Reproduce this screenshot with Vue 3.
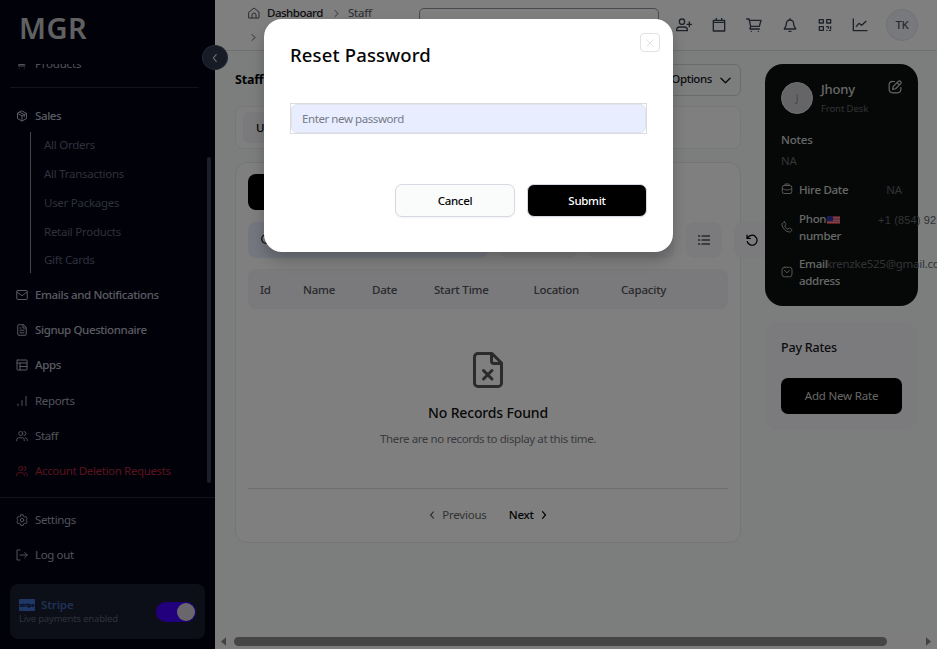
<script setup>
const icons = {
  cart: 'M1.5 2h2.2l2.3 11h11.5l2.5-8.5H4.5M6 13l-1 3h13M6.500 20.500h.1M16.500 20.500h.1',
  box: 'M12 2l9 4.800v10.400L12 22l-9-4.800V6.800zM3 6.800l9 5 9-5M12 12v10M7.500 4.400l9 5v4',
  mail: 'M3 3h18a1.500 1.500 0 0 1 1.500 1.500v15a1.500 1.500 0 0 1-1.500 1.500H3a1.500 1.500 0 0 1-1.500-1.500v-15A1.500 1.500 0 0 1 3 3zM2 6l10 7.500L22 6',
  doc: 'M14.500 1.500H5a1.500 1.500 0 0 0-1.500 1.500v18A1.500 1.500 0 0 0 5 22.500h14a1.500 1.500 0 0 0 1.500-1.500V7.500zM14 1.500V8h6M8 12.500h8M8 17.500h8M8 8h2',
  layout: 'M3 2h18a1 1 0 0 1 1 1v18a1 1 0 0 1-1 1H3a1 1 0 0 1-1-1V3a1 1 0 0 1 1-1zM2 8h20M8 8v14M8 15h14',
  bars: 'M4 21v-3M12 21V11M20 21V3',
  users: 'M13.500 7a4 4 0 1 1-8 0 4 4 0 0 1 8 0zM16 3a4 4 0 0 1 0 8M1.500 21.500v-2a4 4 0 0 1 4-4h7a4 4 0 0 1 4 4v2M19 15.500a4 4 0 0 1 3.500 4v2',
  gear: 'M9.600 1.500h4.800l.7 3.200 2 1.200 3-.9 2.400 4.200-2.300 2.100v1.800l2.300 2.100-2.400 4.200-3-.9-2 1.200-.7 3.200H9.600l-.7-3.200-2-1.200-3 .9-2.400-4.200 2.300-2.100v-1.800L1.500 9.200 3.900 5l3 .9 2-1.200zM15.500 12.200a3.500 3.500 0 1 1-7 0 3.500 3.500 0 0 1 7 0z',
  logout: 'M8 2H2v20h6M8 12h14.500M17.500 7l5 5-5 5'
}
const main = [
  { t: 'Emails and Notifications', i: 'mail', c: 'strong' },
  { t: 'Signup Questionnaire', i: 'doc', c: 'strong' },
  { t: 'Apps', i: 'layout', c: 'strong' },
  { t: 'Reports', i: 'bars', c: '' },
  { t: 'Staff', i: 'users', c: '' },
  { t: 'Account Deletion Requests', i: 'users', c: 'danger' }
]
const subs = ['All Orders', 'All Transactions', 'User Packages', 'Retail Products', 'Gift Cards']
const tools = [
  'M13 7a4 4 0 1 1-8 0 4 4 0 0 1 8 0zM1 20.500v-1A4.500 4.500 0 0 1 5.500 15h7a4.500 4.500 0 0 1 4.500 4.500v1H1M20 7.500v7M16.500 11h7',
  'M3.500 5h17v16h-17zM8 2v3M16 2v3M3.500 8h17',
  'M1 3h3.500L7 14h13l2.500-9H5M7 14l-1 4h14M8 21.500h.1M18.500 21.500h.1',
  'M6.500 10a5.500 5.500 0 0 1 11 0c0 5 3 5.500 3 8h-17c0-2.500 3-3 3-8zM12 2.500v2M10.500 21.500h3',
  'M3.500 4h6v5h-6zM14.500 4h6v5h-6zM3.500 14.500h6v5.500h-6zM14.500 14.500h2.500v2.500M20.500 14.500v3M14.500 20h.500M18.500 20h2',
  'M2 3v17.500h20.500M6.500 14l4-4.500 4 3 6.500-6'
]
const columns = ['Id', 'Name', 'Date', 'Start Time', 'Location', 'Capacity']
</script>

<template>
  <div class="screen">
    <aside class="sidebar">
      <div class="logo">MGR</div>
      <div class="scroller">
        <div class="item cut"><svg viewBox="0 0 24 24"><path :d="icons.cart" /></svg><span>Products</span></div>
        <div class="rule"></div>
        <div class="item strong sales"><svg viewBox="0 0 24 24"><path :d="icons.box" /></svg><span>Sales</span></div>
        <div class="subs"><div v-for="s in subs" :key="s">{{ s }}</div></div>
        <div v-for="m in main" :key="m.t" class="item" :class="m.c"><svg viewBox="0 0 24 24"><path :d="icons[m.i]" /></svg><span>{{ m.t }}</span></div>
        <i class="vbar"></i>
      </div>
      <div class="foot">
        <div class="item"><svg viewBox="0 0 24 24"><path :d="icons.gear" /></svg><span>Settings</span></div>
        <div class="item"><svg viewBox="0 0 24 24"><path :d="icons.logout" /></svg><span>Log out</span></div>
        <div class="stripe">
          <div><div class="sname"><b>stripe</b><span>Stripe</span></div><div class="slive">Live payments enabled</div></div>
          <div class="toggle"><i></i></div>
        </div>
      </div>
      <div class="collapse"><svg viewBox="0 0 24 24"><path d="M15 4l-7 8 7 8" /></svg></div>
    </aside>

    <div class="page">
      <header>
        <div class="crumbs">
          <div><svg class="home" viewBox="0 0 24 24"><path d="M2 10l10-8 10 8v12H2zM8 22v-6a4 4 0 0 1 8 0v6" /></svg><span class="dash">Dashboard</span><svg class="sep" viewBox="0 0 24 24"><path d="M8 4l8 8-8 8" /></svg><span class="st">Staff</span></div>
          <div><svg class="sep two" viewBox="0 0 24 24"><path d="M8 4l8 8-8 8" /></svg></div>
        </div>
        <div class="search"></div>
        <div class="tools"><svg v-for="(d, n) in tools" :key="n" viewBox="0 0 24 24"><path :d="d" /></svg></div>
        <div class="tk">TK</div>
      </header>

      <div class="content">
        <section class="left">
          <div class="title"><h2>Staff</h2><div class="options"><span>Options</span><svg viewBox="0 0 24 24"><path d="M2 7l10 10L22 7" /></svg></div></div>
          <div class="tabs"><div>Upcoming</div></div>
          <div class="card">
            <div class="black"></div>
            <div class="filters">
              <div class="find"><svg viewBox="0 0 24 24"><circle cx="10" cy="10" r="8.500" /><path d="M16 16l6 6" /></svg></div>
              <div class="f1"></div><div class="f2"></div>
              <div class="f3"><svg viewBox="0 0 24 24"><path d="M8 4h15M8 12h15M8 20h15M1 4h2.500M1 12h2.500M1 20h2.500" /></svg></div>
              <div class="f4"><svg viewBox="0 0 24 24"><path d="M2 2v7h7M3 8.500A10 10 0 1 1 2.500 15" /></svg></div>
            </div>
            <div class="thead"><span v-for="c in columns" :key="c">{{ c }}</span></div>
            <div class="empty">
              <svg viewBox="0 0 30 36"><path d="M5 1.500h14l9.500 9.500v20a3.500 3.500 0 0 1-3.500 3.500H5A3.500 3.500 0 0 1 1.500 31V5A3.500 3.500 0 0 1 5 1.500zM18.500 1.500V9a2.500 2.500 0 0 0 2.500 2.500h7.500M10.500 18.500l8.500 8.500M19 18.500L10.500 27" /></svg>
              <h3>No Records Found</h3>
              <p>There are no records to display at this time.</p>
            </div>
            <div class="pager">
              <svg viewBox="0 0 24 24"><path d="M15.500 4.500l-7 7.500 7 7.500" /></svg><span class="prev">Previous</span>
              <span class="next">Next</span><svg class="dark" viewBox="0 0 24 24"><path d="M8.500 4l7 8-7 8" /></svg>
            </div>
          </div>
        </section>

        <aside class="right">
          <div class="profile">
            <div class="who">
              <div class="face">J</div>
              <div class="names"><strong>Jhony</strong><span>Front Desk</span></div>
              <svg viewBox="0 0 24 24"><path d="M11 2.500H8A6 6 0 0 0 2 8v8a6 6 0 0 0 6 6h8a6 6 0 0 0 6-6v-3M8 16l1-5 8.500-8.500a2.500 2.500 0 0 1 4 4L13 15zM15.500 4.500l4 4" /></svg>
            </div>
            <div class="notes">Notes</div><div class="na">NA</div>
            <div class="info hire"><svg viewBox="0 0 24 24"><path d="M6 5h12a3.500 3.500 0 0 1 3.500 3.500v9A3.500 3.500 0 0 1 18 21H6a3.500 3.500 0 0 1-3.500-3.500v-9A3.500 3.500 0 0 1 6 5zM8 5V2h8v3M2.500 11c5 4 14 4 19 0" /></svg><label>Hire Date</label><span>NA</span></div>
            <div class="info phone"><svg viewBox="0 0 24 24"><path d="M7 2c2 1 3 4 2.500 5.500L7.500 10c1 3 3.500 5.500 6.500 6.500l2.500-2c2 0 4.500 1.500 5.500 3.500-1 3-3.500 4.500-6 4C9 20.500 3.500 15 2 8c-.5-3 2-5.500 5-6z" /></svg><label>Phone<br>number</label>
              <div class="tel"><svg class="flag" viewBox="0 0 13 8"><path class="fw" d="M0 0h13v8H0z" /><path class="fr" d="M0 0h13v1.500H0zM0 2.300h13v1.400H0zM0 4.500h13v1.300H0zM0 6.600h13V8H0z" /><path class="fb" d="M0 0h6v5H0z" /></svg><span>+1 (854) 92</span></div></div>
            <div class="info email"><svg viewBox="0 0 24 24"><rect x="2" y="2.500" width="20" height="19" rx="5" /><path d="M7 9l5 4.500L17 9" /></svg><label>Email<br>address</label><span>krenzke525@gmail.com</span></div>
          </div>
          <div class="rates"><h4>Pay Rates</h4><div>Add New Rate</div></div>
        </aside>
      </div>
      <div class="hscroll"><svg viewBox="0 0 6 10"><path d="M6 0v10L0 5z" /></svg><i></i><svg viewBox="0 0 6 10"><path d="M0 0v10l6-5z" /></svg></div>
    </div>

    <div class="overlay">
      <div class="modal">
        <div class="mhead"><h1>Reset Password</h1><div class="close"><svg viewBox="0 0 24 24"><path d="M2 2l20 20M22 2L2 22" /></svg></div></div>
        <div class="field"><div>Enter new password</div></div>
        <div class="actions"><div class="cancel">Cancel</div><div class="submit">Submit</div></div>
      </div>
    </div>
  </div>
</template>

<style>
body { margin: 0; overflow: hidden; }
</style>

<style scoped>
* { box-sizing: border-box; }
h1, h2, h3, h4, p { margin: 0; }
svg { fill: none; stroke: currentColor; stroke-width: 2; stroke-linecap: round; stroke-linejoin: round; flex: none; display: block; }
.screen { position: relative; width: 937px; height: 649px; overflow: hidden; display: flex; font-family: "Noto Sans", sans-serif; font-size: 11.5px; letter-spacing: -.2px; white-space: nowrap; }
.sidebar { position: relative; width: 215px; flex: none; background: #020214; color: #a2a6b2; display: flex; flex-direction: column; letter-spacing: -.36px; }
.logo { height: 64px; padding: 7px 0 0 19px; font-size: 29px; line-height: 42px; font-weight: 600; color: #c2c2c4; letter-spacing: .5px; }
.scroller { position: relative; height: 434px; overflow: hidden; border-bottom: 1px solid #24273a; }
.item { height: 35.1px; display: flex; align-items: center; padding-left: 16px; gap: 7px; }
.item svg { width: 12px; height: 12px; }
.item span { line-height: 16px; }
.strong { font-weight: 500; color: #b4b7c2; letter-spacing: -.38px; }
.danger { color: #b22638; }
.cut { margin-top: -18px; }
.cut span { letter-spacing: -.2px; }
.rule { height: 1px; margin: 6px 16px 10px 10px; background: #24273a; }
.subs { margin-left: 30px; border-left: 1px solid #8a8b90; padding-left: 13px; height: 141px; margin-bottom: 4.500px; margin-top: -1px; color: #5d6376; letter-spacing: -.27px; }
.subs div { height: 28.800px; line-height: 26px; }
.vbar { position: absolute; left: 207px; top: 93px; width: 4px; height: 326px; border-radius: 2px; background: #334155; }
.foot { padding-top: 4px; }
.stripe { margin: 12px 10px 0; height: 55px; border-radius: 8px; background: #191e30; display: flex; align-items: center; justify-content: space-between; padding: 0 9px; }
.sname { display: flex; align-items: center; gap: 6px; font-weight: 600; color: #3f62a8; line-height: 14px; letter-spacing: -.1px; }
.sname b { width: 16px; height: 12px; background: #3f6fce; border-radius: 1px; color: #0d1738; font-size: 5.500px; line-height: 12px; text-align: center; letter-spacing: -.3px; }
.slive { font-size: 9.500px; line-height: 14px; color: #5d6376; letter-spacing: -.18px; }
.toggle { width: 40px; height: 20px; border-radius: 10px; background: #4400fa; padding: 1px; display: flex; justify-content: flex-end; }
.toggle i { width: 18px; height: 18px; border-radius: 50%; background: #d2cfd6; }
.collapse { position: absolute; z-index: 3; left: 202px; top: 45px; width: 26px; height: 25px; border: 1px solid #47526a; border-radius: 50%; background: #2c374c; color: #eee; display: grid; place-items: center; }
.collapse svg { width: 10px; height: 10px; stroke-width: 2.600; }
.page { width: 722px; height: 649px; display: flex; flex-direction: column; background: #f9fdfb; }
header { height: 51px; flex: none; background: #fff; border-bottom: 1px solid #dde0e2; display: flex; }
.crumbs { width: 204px; padding: 1px 0 0 33px; color: #555963; }
.crumbs div { display: flex; align-items: center; height: 24px; }
.crumbs span { line-height: 16px; margin-top: -1px; }
.home { width: 12px; height: 12px; margin-right: 7px; }
.dash { width: 56px; color: #1d2026; font-weight: 500; letter-spacing: -.5px; }
.sep { width: 9px; height: 9px; margin: 0 7px 0 9px; stroke-width: 2.600; }
.two { margin: 0 0 0 1px; }
.search { width: 240px; height: 32px; margin-top: 8px; border: 1px solid #8d929c; border-radius: 5px; }
.tools { flex: none; width: 193px; height: 49px; padding: 0 0 0 17px; display: flex; align-items: center; gap: 19.200px; margin-right: 34px; color: #3b4354; }
.tools svg { width: 16px; height: 16px; }
.tk { width: 32px; height: 32px; border-radius: 50%; background: #f1f3f8; border: 1px solid #dfe3ea; margin: 9px 0 0; text-align: center; line-height: 30px; color: #4b5260; font-weight: 500; letter-spacing: -.3px; }
.content { height: 583px; display: flex; padding: 13px 19px 0 20px; gap: 24px; }
.left { width: 506px; flex: none; }
.title { height: 32px; display: flex; justify-content: space-between; align-items: center; }
h2 { font-size: 12.500px; line-height: 18px; font-weight: 700; color: #050505; }
.options { width: 82px; height: 32px; border: 1px solid #d0d4da; border-radius: 6px; display: flex; align-items: center; gap: 8px; justify-content: flex-end; padding-right: 9px; font-weight: 500; font-size: 11.500px; letter-spacing: -.4px; color: #16181c; }
.options span { line-height: 16px; margin-top: -2px; }
.options svg { width: 11px; height: 11px; stroke-width: 3; }
.tabs { height: 43px; margin-top: 10px; padding: 5px 7px; border: 1px solid #edf0f1; border-radius: 8px; background: #fff; }
.tabs div { width: 90px; height: 31px; border-radius: 6px; background: #f4f4f8; padding-left: 13px; line-height: 31px; font-weight: 500; }
.card { margin-top: 13px; height: 381px; border: 1px solid #e8ebec; border-radius: 12px; background: #fff; padding: 11px 12px; }
.black { width: 110px; height: 36px; border-radius: 8px; background: #000; }
.filters { margin-top: 12px; height: 36px; display: flex; gap: 11.500px; }
.filters div { flex: none; height: 36px; border-radius: 8px; background: #f6f6fb; display: grid; place-items: center; }
.filters .find { width: 240px; background: #e8eeff; place-items: center start; padding-left: 13px; }
.f1 { width: 77px; } .f2 { width: 86px; } .f3, .f4 { width: 36.500px; }
.filters svg { width: 12px; height: 12px; stroke-width: 2.400; }
.thead { margin-top: 11px; height: 40px; border-radius: 8px; background: #f4f4f8; color: #52525b; font-weight: 500; display: grid; grid-template-columns: 43px 69px 62px 99.500px 87.500px 90px; padding-left: 12px; align-items: center; }
.empty { height: 180px; border-bottom: 1px solid #dcdddd; padding-top: 43px; text-align: center; }
.empty svg { width: 30px; height: 36px; margin: 0 auto; color: #565656; stroke-width: 3; }
h3 { font-size: 14px; line-height: 20px; font-weight: 500; margin-top: 15px; color: #111; letter-spacing: -.15px; }
.empty p { margin-top: 8px; line-height: 16px; color: #73767c; letter-spacing: -.4px; }
.pager { height: 52px; display: flex; justify-content: center; align-items: center; color: #666; }
.pager span { line-height: 16px; margin-top: -1px; }
.pager svg { width: 10px; height: 10px; stroke-width: 3; margin: 0 -1px; }
.pager .prev { margin: -1px 22px 0 6px; }
.pager .next { color: #0a0a0a; font-weight: 500; margin-right: 6px; }
.pager .dark { color: #0a0a0a; }
.right { width: 153px; flex: none; }
.profile { height: 242px; border-radius: 18px; background: #0d110f; padding: 17px 16px; color: #cdd0d0; }
.who { height: 34px; display: flex; }
.face { width: 32px; height: 32px; margin-top: 1px; border-radius: 50%; background: #cbc9ce; border: 1px solid #dedde0; color: #8b8b90; font-size: 10px; text-align: center; line-height: 30px; }
.names { width: 67px; margin-left: 8px; }
.names strong { display: block; font-size: 13px; line-height: 17px; font-weight: 500; }
.names span { display: block; font-size: 9.500px; line-height: 17px; margin-top: 2px; color: #62656c; letter-spacing: -.1px; }
.who svg { width: 14px; height: 14px; margin-top: -1px; }
.notes { margin-top: 17px; line-height: 16px; font-weight: 500; }
.na { margin-top: 5px; line-height: 16px; color: #66696f; }
.info { display: flex; align-items: center; }
.info svg { width: 12px; height: 12px; margin-right: 6px; color: #aaa; }
.info label { font-weight: 500; line-height: 17px; letter-spacing: -.3px; }
.info > span { color: #62656c; }
.hire { height: 16px; margin-top: 12px; }
.hire span { margin-left: auto; }
.phone { height: 34px; margin-top: 12.500px; }
.tel { display: flex; align-items: center; color: #62656c; font-family: "Liberation Sans", sans-serif; font-size: 11px; letter-spacing: .15px; margin: -13px 0 0 -14px; }
.info .flag { width: 13px; height: 8px; margin-right: 38px; stroke: none; }
.fw { fill: #eee; } .fr { fill: #d13243; } .fb { fill: #3434a8; }
.email { height: 34px; margin-top: 11.500px; }
.email > span { margin: -17px 0 0 -14px; letter-spacing: -.25px; }
.rates { height: 108px; margin-top: 16px; border-radius: 14px; background: #f6f6fb; padding: 17px 16px; }
h4 { font-size: 12.500px; line-height: 18px; font-weight: 500; color: #18181b; }
.rates div { margin-top: 21px; height: 36px; border-radius: 7px; background: #000; color: #ccc; text-align: center; line-height: 36px; }
.hscroll { height: 15px; flex: none; display: flex; align-items: center; padding: 0 6px; color: #858585; background: #fafafa; }
.hscroll svg { width: 5px; height: 9px; fill: currentColor; stroke: none; }
.hscroll i { width: 653px; height: 9px; border-radius: 5px; background: #8b8b8b; margin: 0 39px 0 8px; }
.overlay { position: absolute; z-index: 5; inset: 0; background: rgba(0,0,0,.5); display: flex; align-items: flex-start; justify-content: center; padding-top: 19px; }
.modal { width: 409px; height: 233px; border-radius: 18px; background: #fff; padding: 14px 13px 0 26px; box-shadow: 0 8px 14px rgba(0,0,0,.22); }
.mhead { display: flex; justify-content: space-between; }
h1 { margin-top: 9px; font-size: 18.500px; line-height: 26px; font-weight: 500; color: #050505; letter-spacing: .15px; }
.close { width: 20px; height: 19px; border: 1px solid #dfe3e3; border-radius: 4px; display: grid; place-items: center; color: #cfd5d8; }
.close svg { width: 8px; height: 8px; }
.field { width: 357px; height: 31px; margin-top: 35px; border: 1px solid #dcdcdc; }
.field div { height: 29px; border-radius: 6px; border: 1px solid #dfe3ed; background: #e8eeff; padding-left: 10px; line-height: 28px; color: #767b87; letter-spacing: -.42px; }
.actions { width: 357px; margin-top: 50px; display: flex; gap: 12px; justify-content: flex-end; }
.actions div { width: 120px; height: 33px; border-radius: 7px; border: 1px solid #d5dae1; text-align: center; line-height: 32px; font-weight: 500; box-shadow: 0 1px 2px rgba(0,0,0,.05); }
.actions .cancel { background: #fafbfb; color: #050505; letter-spacing: -.3px; }
.actions .submit { background: #000; color: #fff; letter-spacing: -.3px; }
</style>
